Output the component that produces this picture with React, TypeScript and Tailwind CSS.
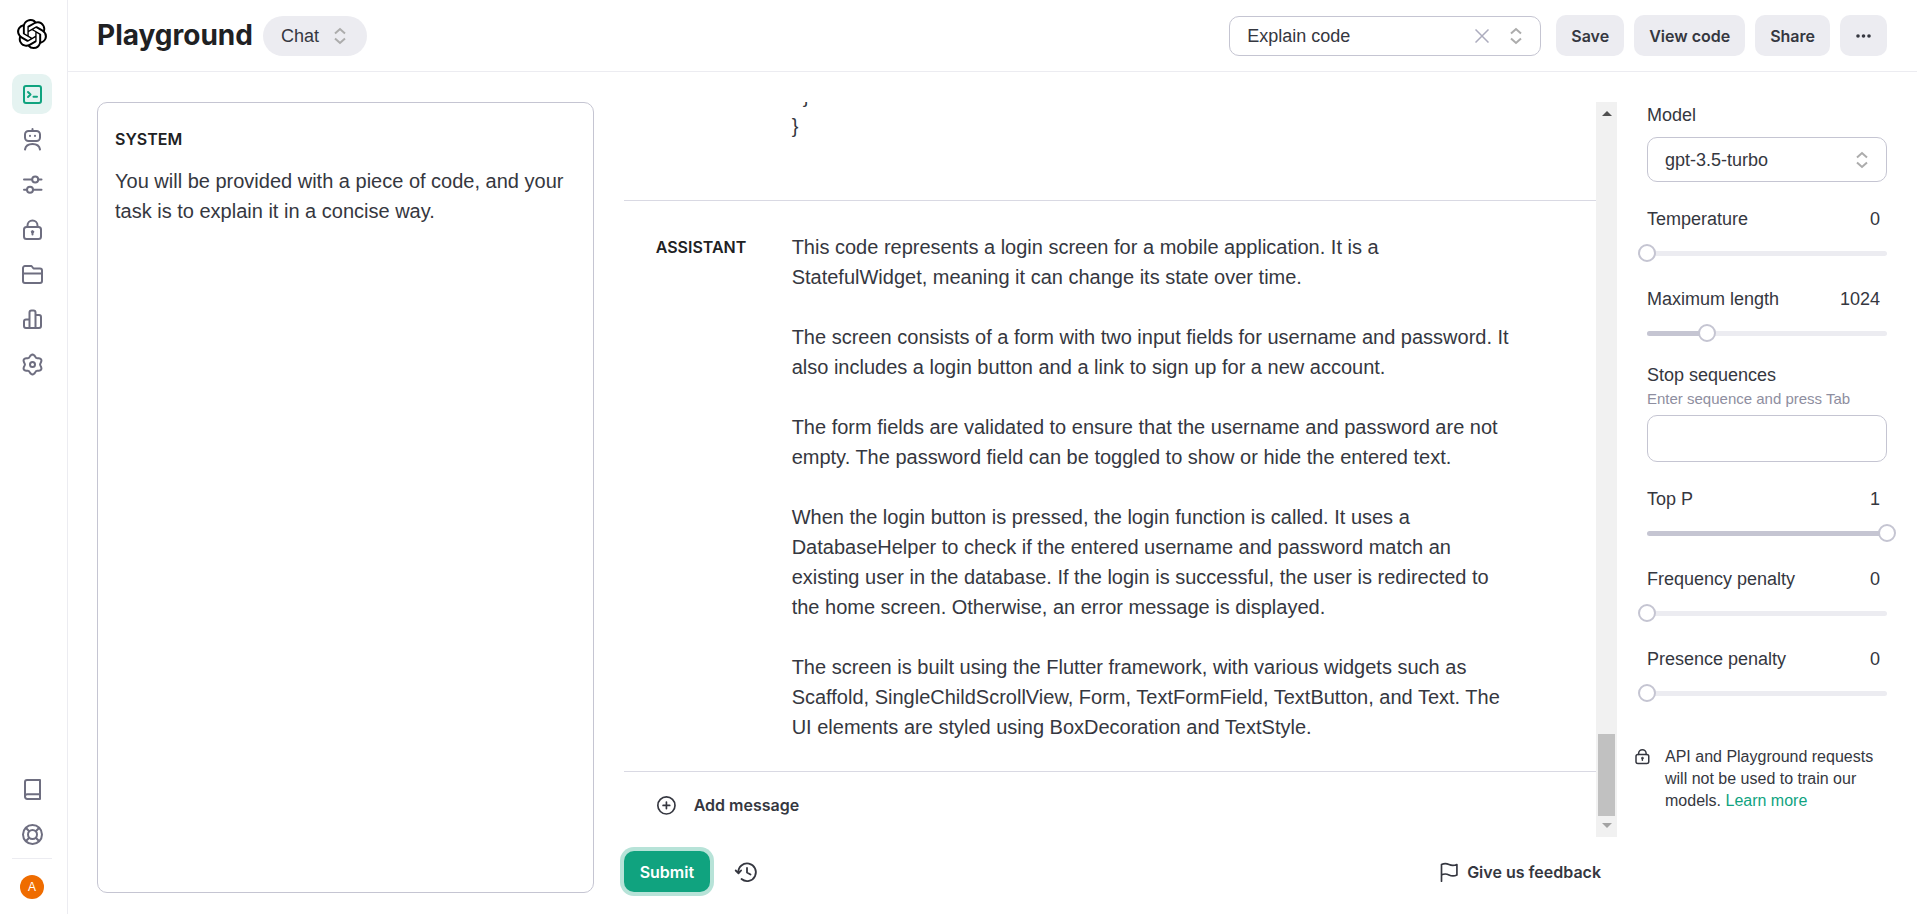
import { useState, type ReactNode } from "react";
import { SiOpenai } from "react-icons/si";

type IconProps = { children: ReactNode; className?: string };

function Icon({ children, className = "size-6" }: IconProps) {
  return (
    <svg
      viewBox="-0.5 -0.5 24 24"
      fill="none"
      stroke="currentColor"
      strokeWidth="2"
      strokeLinecap="round"
      strokeLinejoin="round"
      aria-hidden="true"
      className={`shrink-0 ${className}`}
    >
      {children}
    </svg>
  );
}

const terminalIcon = (
  <>
    <rect x="3.5" y="3.5" width="17" height="17" rx="2" />
    <path d="m7.500 9.500 2.500 2.500-2.500 2.500M13 14.300h3.500" />
  </>
);

const robotIcon = (
  <>
    <path d="M12 1.500v2" />
    <rect x="4.500" y="3.500" width="15" height="10" rx="3.500" />
    <path d="M9.500 8.300v.3M14.500 8.300v.3M4.500 22c.6-3.600 3.300-5.500 7.500-5.500s6.900 1.900 7.500 5.500" />
  </>
);

const slidersIcon = (
  <>
    <path d="M3.500 7h8M18 7h3M3.500 17.300h3M13 17.300h8" />
    <circle cx="14.700" cy="7" r="3" />
    <circle cx="9.500" cy="17.300" r="3" />
  </>
);

const lockIcon = (
  <>
    <rect x="3.500" y="9.500" width="17" height="12" rx="2.500" />
    <path d="M7 9.500V8a5 5 0 0 1 10 0v1.500" />
    <circle cx="12" cy="14.300" r="1.200" fill="currentColor" strokeWidth="1" />
    <path d="M12 15v2" />
  </>
);

const folderIcon = (
  <path d="M2.500 11h19M2.500 5.500v13a2 2 0 0 0 2 2h15a2 2 0 0 0 2-2V8a2 2 0 0 0-2-2h-6.500L11 3.500H4.500a2 2 0 0 0-2 2Z" />
);

const chartIcon = (
  <path d="M9 20.500V5a2 2 0 0 1 2-2h2a2 2 0 0 1 2 2v15.500M9 12H5.500a2 2 0 0 0-2 2v4.500a2 2 0 0 0 2 2h13a2 2 0 0 0 2-2V9.500a2 2 0 0 0-2-2H15" />
);

const gearOutline = Array.from({ length: 72 }, (_, i) => {
  const angle = (i * Math.PI) / 36;
  const radius = 8.8 + 1.2 * Math.cos(6 * angle);
  return `${12 + radius * Math.sin(angle)},${12 - radius * Math.cos(angle)}`;
}).join(" ");

const gearIcon = (
  <>
    <polygon points={gearOutline} />
    <circle cx="12" cy="12" r="2.500" />
  </>
);

const bookIcon = (
  <path d="M4.500 19V4.500a2 2 0 0 1 2-2h13v19H6.800a2.300 2.300 0 0 1-2.300-2.500 2.300 2.300 0 0 1 2.300-2.200h12.700" />
);

const helpIcon = (
  <>
    <circle cx="12" cy="12" r="9.500" />
    <circle cx="12" cy="12" r="4.500" />
    <path d="m5.500 5.500 3.200 3.200M18.500 5.500l-3.200 3.200M5.500 18.500l3.200-3.200M18.500 18.500l-3.200-3.200" />
  </>
);

const navItems = [
  { label: "Playground", icon: terminalIcon, active: true },
  { label: "Assistants", icon: robotIcon },
  { label: "Fine-tuning", icon: slidersIcon },
  { label: "API keys", icon: lockIcon },
  { label: "Files", icon: folderIcon },
  { label: "Usage", icon: chartIcon },
  { label: "Settings", icon: gearIcon },
];

const helpItems = [
  { label: "Documentation", icon: bookIcon },
  { label: "Help", icon: helpIcon },
];

function NavLink({ label, icon, active }: { label: string; icon: ReactNode; active?: boolean }) {
  return (
    <a
      href="#"
      aria-label={label}
      aria-current={active ? "page" : undefined}
      className={`grid size-10 place-items-center rounded-[10px] ${active ? "bg-[#e5f3f1] text-[#10a37f]" : "text-[#6e6e80]"}`}
    >
      <Icon>{icon}</Icon>
    </a>
  );
}

function Sidebar() {
  return (
    <nav className="flex w-[68px] shrink-0 flex-col border-r border-[#ececf1] pb-[15px] pl-3 pr-[15px] pt-[19px]">
      <a href="#" aria-label="Home" className="mx-auto mb-[25px] text-black">
        <SiOpenai className="size-[30px]" />
      </a>
      <div className="flex flex-col gap-[5px]">
        {navItems.map((item) => (
          <NavLink key={item.label} {...item} />
        ))}
      </div>
      <div className="mt-auto flex flex-col gap-[5px]">
        {helpItems.map((item) => (
          <NavLink key={item.label} {...item} />
        ))}
      </div>
      <hr className="mb-4 mt-1 border-[#ececf1]" />
      <button type="button" className="mx-auto size-6 rounded-full bg-[#ef6c00] text-xs text-white">
        A
      </button>
    </nav>
  );
}

function Chevrons() {
  return (
    <svg
      viewBox="0 0 14 18"
      fill="none"
      stroke="currentColor"
      strokeWidth="2"
      aria-hidden="true"
      className="pointer-events-none h-[18px] w-[14px] shrink-0 text-[#acacac]"
    >
      <path d="m2 6.500 5-4.500 5 4.500M2 11.500l5 4.500 5-4.500" />
    </svg>
  );
}

const strongText = "font-['Inter','Liberation_Sans',sans-serif] text-base font-semibold";
const grayButton = `h-[41px] rounded-[10px] bg-[#ececf1] ${strongText}`;

function Header() {
  return (
    <header className="flex h-[72px] shrink-0 items-center border-b border-[#ececf1] pl-[29px] pr-[30px]">
      <h1 className="font-['Inter','Liberation_Sans',sans-serif] text-[28px] font-bold text-[#202123]">Playground</h1>
      <div className="ml-[10px] flex h-10 w-[104px] items-center rounded-full bg-[#ececf1] pl-[18px] pr-5">
        <select aria-label="Mode" className="min-w-0 flex-1 appearance-none outline-none">
          <option>Chat</option>
        </select>
        <Chevrons />
      </div>
      <div className="ml-auto flex items-center gap-[10px]">
        <div className="mr-[5px] flex h-10 w-[312px] items-center rounded-[10px] border border-[#c5c5d2] px-[17px]">
          <select aria-label="Preset" className="min-w-0 flex-1 appearance-none outline-none">
            <option>Explain code</option>
          </select>
          <button type="button" aria-label="Clear preset" className="mr-5 text-[#acacbe]">
            <svg viewBox="0 0 14 14" stroke="currentColor" strokeWidth="1.500" className="size-[14px]">
              <path d="m.5.5 13 13M13.500.5l-13 13" />
            </svg>
          </button>
          <Chevrons />
        </div>
        <button type="button" className={`px-[15px] ${grayButton}`}>Save</button>
        <button type="button" className={`px-[15px] ${grayButton}`}>View code</button>
        <button type="button" className={`px-[15px] ${grayButton}`}>Share</button>
        <button type="button" aria-label="More" className={`px-4 ${grayButton}`}>
          <svg viewBox="0 0 15 4" fill="currentColor" className="h-1 w-[15px]">
            <circle cx="2" cy="2" r="1.800" />
            <circle cx="7.500" cy="2" r="1.800" />
            <circle cx="13" cy="2" r="1.800" />
          </svg>
        </button>
      </div>
    </header>
  );
}

const reply = [
  "This code represents a login screen for a mobile application. It is a StatefulWidget, meaning it can change its state over time.",
  "The screen consists of a form with two input fields for username and password. It also includes a login button and a link to sign up for a new account.",
  "The form fields are validated to ensure that the username and password are not empty. The password field can be toggled to show or hide the entered text.",
  "When the login button is pressed, the login function is called. It uses a DatabaseHelper to check if the entered username and password match an existing user in the database. If the login is successful, the user is redirected to the home screen. Otherwise, an error message is displayed.",
  "The screen is built using the Flutter framework, with various widgets such as Scaffold, SingleChildScrollView, Form, TextFormField, TextButton, and Text. The UI elements are styled using BoxDecoration and TextStyle.",
];

function Scrollbar() {
  return (
    <div aria-hidden="true" className="flex w-[21px] shrink-0 flex-col items-center bg-[#f1f1f1]">
      <svg viewBox="0 0 10 5" className="mt-[9px] h-[5px] w-[10px] fill-[#505050]">
        <path d="M0 5 5 0l5 5Z" />
      </svg>
      <div className="mt-auto h-[82px] w-[17px] bg-[#c1c1c1]" />
      <svg viewBox="0 0 10 5" className="mb-[9px] mt-[7px] h-[5px] w-[10px] fill-[#a3a3a3]">
        <path d="m0 0 5 5 5-5Z" />
      </svg>
    </div>
  );
}

function Conversation() {
  return (
    <section className="flex min-h-0 min-w-0 flex-col pb-px">
      <div className="flex min-h-0 flex-1">
        <div className="flex min-w-0 flex-1 flex-col justify-end overflow-hidden">
          <div className="border-b border-[#d9d9e3] pb-[59px] pl-[168px] text-xl leading-[30px]">
            <p className="whitespace-pre">{"  }\n}"}</p>
          </div>
          <div className="flex border-b border-[#d9d9e3] pb-[29px] pl-8 pt-[31px]">
            <h2 className={`w-[136px] shrink-0 text-[#202123] ${strongText}`}>
              <span className="leading-[30px]">ASSISTANT</span>
            </h2>
            <div className="flex max-w-[722px] flex-col gap-[30px] text-xl leading-[30px]">
              {reply.map((paragraph) => (
                <p key={paragraph}>{paragraph}</p>
              ))}
            </div>
          </div>
          <button type="button" className={`flex h-[65px] shrink-0 items-center gap-[18px] pl-8 ${strongText}`}>
            <Icon className="size-5">
              <circle cx="12" cy="12" r="10.300" />
              <path d="M12 8v8M8 12h8" />
            </Icon>
            Add message
          </button>
        </div>
        <Scrollbar />
      </div>
      <div className="mt-[14px] flex h-[41px] shrink-0 items-center">
        <button
          type="button"
          className={`h-[41px] rounded-[10px] bg-[#10a37f] px-4 text-white shadow-[0_0_0_4px_#b7e3d8] ${strongText}`}
        >
          Submit
        </button>
        <button type="button" aria-label="History" className="ml-6">
          <Icon>
            <path
              strokeWidth="1.800"
              d="M3.800 12A8.800 8.800 0 1 1 7 18.500M1.200 10 4 12.800 6.600 10M12.500 7.500V12l3.500 2"
            />
          </Icon>
        </button>
        <button type="button" className={`ml-auto mr-4 flex items-center gap-2 ${strongText}`}>
          <Icon className="size-5">
            <path d="M2.500 22.500V2.500c3-1.500 6-1.500 9 0s6 1.500 9.500 0v12.500c-3 1.500-6.500 1.500-9.500 0s-6-1.500-9 0" />
          </Icon>
          Give us feedback
        </button>
      </div>
    </section>
  );
}

type SliderProps = { id: string; label: string; start: number; max: number; step: number };

function SliderField({ id, label, start, max, step }: SliderProps) {
  const [value, setValue] = useState(start);
  return (
    <div>
      <div className="flex items-center justify-between pr-[7px] leading-[25px]">
        <label htmlFor={id}>{label}</label>
        <output htmlFor={id}>{value}</output>
      </div>
      <div className="mt-3 grid items-center">
        <div className="h-[5px] overflow-hidden rounded-full bg-[#ececf1] [grid-area:1/1]">
          <div className="h-full bg-[#c5c5d2]" style={{ width: `${(value / max) * 100}%` }} />
        </div>
        <input
          id={id}
          type="range"
          min={0}
          max={max}
          step={step}
          value={value}
          onChange={(event) => setValue(Number(event.target.value))}
          className="z-10 -mx-[9px] h-[18px] appearance-none bg-transparent [grid-area:1/1] [&::-webkit-slider-thumb]:size-[18px] [&::-webkit-slider-thumb]:appearance-none [&::-webkit-slider-thumb]:rounded-full [&::-webkit-slider-thumb]:border-2 [&::-webkit-slider-thumb]:border-[#c5c5d2] [&::-webkit-slider-thumb]:bg-white"
        />
      </div>
    </div>
  );
}

function Parameters() {
  return (
    <aside className="flex min-w-0 flex-col gap-[25px] pt-px">
      <div>
        <label htmlFor="model" className="block leading-[25px]">Model</label>
        <div className="mt-[9px] flex h-[45px] items-center rounded-[10px] border border-[#c5c5d2] px-[17px]">
          <select id="model" className="min-w-0 flex-1 appearance-none outline-none">
            <option>gpt-3.5-turbo</option>
          </select>
          <Chevrons />
        </div>
      </div>
      <SliderField id="temperature" label="Temperature" start={0} max={2} step={0.01} />
      <SliderField id="length" label="Maximum length" start={1024} max={4096} step={1} />
      <div className="-mt-1">
        <label htmlFor="stop" className="block leading-[25px]">Stop sequences</label>
        <p id="stop-hint" className="text-[15px] leading-[22px] text-[#8e8ea0]">Enter sequence and press Tab</p>
        <input
          id="stop"
          type="text"
          aria-describedby="stop-hint"
          className="mt-[5px] h-[47px] w-full rounded-[10px] border border-[#c5c5d2] px-3 outline-none"
        />
      </div>
      <SliderField id="top-p" label="Top P" start={1} max={1} step={0.01} />
      <SliderField id="frequency" label="Frequency penalty" start={0} max={2} step={0.01} />
      <SliderField id="presence" label="Presence penalty" start={0} max={2} step={0.01} />
      <div className="-ml-[14px] mt-[19px] flex gap-[14px] text-base leading-[22px]">
        <Icon className="mt-px size-[18px]">{lockIcon}</Icon>
        <p>
          API and Playground requests will not be used to train our models.{" "}
          <a href="#" className="text-[#10a37f]">Learn more</a>
        </p>
      </div>
    </aside>
  );
}

export default function App() {
  return (
    <div className="flex h-screen bg-white font-['Liberation_Sans',Arial,sans-serif] text-lg text-[#353740]">
      <Sidebar />
      <div className="flex min-w-0 flex-1 flex-col">
        <Header />
        <main className="grid min-h-0 flex-1 grid-cols-[minmax(0,1fr)_minmax(0,2fr)_240px] gap-[30px] pb-[21px] pl-[29px] pr-[30px] pt-[30px]">
          <section className="flex min-w-0 flex-col rounded-[10px] border border-[#c5c5d2] px-[17px] py-6">
            <label htmlFor="system" className={`text-[#202123] ${strongText}`}>SYSTEM</label>
            <textarea
              id="system"
              className="mt-[15px] flex-1 resize-none text-xl leading-[30px] outline-none"
              defaultValue="You will be provided with a piece of code, and your task is to explain it in a concise way."
            />
          </section>
          <Conversation />
          <Parameters />
        </main>
      </div>
    </div>
  );
}
